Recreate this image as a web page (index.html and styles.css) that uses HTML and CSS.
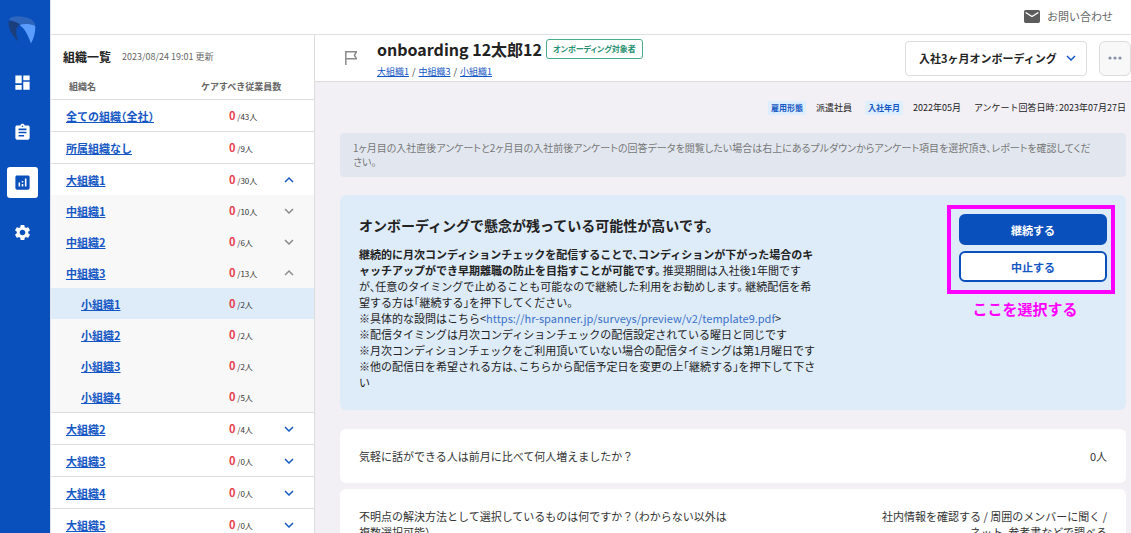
FILE: index.html
```html
<!DOCTYPE html>
<html lang="ja">
<head>
<meta charset="utf-8">
<meta name="viewport" content="width=device-width, initial-scale=1">
<title>組織一覧</title>
<link rel="stylesheet" href="styles.css">
</head>
<body>
<svg class="defs" aria-hidden="true">
  <symbol id="down" viewBox="0 0 24 24"><path d="M16.59 8.59 12 13.17 7.41 8.59 6 10l6 6 6-6z"/></symbol>
  <symbol id="up" viewBox="0 0 24 24"><path d="m12 8-6 6 1.41 1.41L12 10.83l4.59 4.58L18 14z"/></symbol>
</svg>
<div class="app">
  <nav class="rail" aria-label="メインメニュー">
    <svg class="logo" viewBox="0 0 28 28" aria-hidden="true">
      <path fill="#2f66bd" d="M.8 3.500C3 0 9-.3 15 .7c7 1.100 12 4 12.300 9L20 9l-8-.5z"/>
      <path fill="#1b3f7d" d="M.8 5C5 4.500 9 6 12.500 8.800 9 10 6 14 10.500 25.500 4 20-.5 11 .8 5z"/>
      <path fill="#5b9cff" d="M11.500 8.800c5-1.300 11-.8 15.800 1.200C27.500 16 26 22 23 27.500 20 19 17 13 11.500 8.800z"/>
    </svg>
    <a class="rail-item" href="#" aria-label="ダッシュボード"><svg class="icon-l" viewBox="0 0 24 24"><path d="M3 13h8V3H3v10zm0 8h8v-6H3v6zm10 0h8V11h-8v10zm0-18v6h8V3h-8z"/></svg></a>
    <a class="rail-item" href="#" aria-label="アンケート"><svg class="icon-l" viewBox="0 0 24 24"><path d="M19 3h-4.180C14.400 1.840 13.300 1 12 1c-1.300 0-2.400.84-2.820 2H5c-1.100 0-2 .9-2 2v14c0 1.100.9 2 2 2h14c1.100 0 2-.9 2-2V5c0-1.100-.9-2-2-2zm-7 0c.55 0 1 .45 1 1s-.45 1-1 1-1-.45-1-1 .45-1 1-1zm2 14H7v-2h7v2zm3-4H7v-2h10v2zm0-4H7V7h10v2z"/></svg></a>
    <a class="rail-item current" href="#" aria-label="分析"><svg class="icon-l" viewBox="0 0 24 24"><path d="M19 3H5c-1.100 0-2 .9-2 2v14c0 1.100.9 2 2 2h14c1.100 0 2-.9 2-2V5c0-1.100-.9-2-2-2zM9 17H7v-5h2v5zm4 0h-2v-3h2v3zm0-5h-2v-2h2v2zm4 5h-2V7h2v10z"/></svg></a>
    <a class="rail-item" href="#" aria-label="設定"><svg class="icon-l" viewBox="0 0 24 24"><path d="M19.140 12.940c.04-.3.06-.61.06-.94 0-.32-.02-.64-.07-.94l2.030-1.580c.18-.14.23-.41.12-.61l-1.920-3.320c-.12-.22-.37-.29-.59-.22l-2.390.96c-.5-.38-1.030-.7-1.620-.94l-.36-2.540c-.04-.24-.24-.41-.48-.41h-3.840c-.24 0-.43.17-.47.41l-.36 2.540c-.59.24-1.130.57-1.620.94l-2.390-.96c-.22-.08-.47 0-.59.22L2.740 8.870c-.12.21-.08.47.12.61l2.030 1.580c-.05.3-.09.63-.09.94s.02.64.07.94l-2.030 1.580c-.18.14-.23.41-.12.61l1.920 3.320c.12.22.37.29.59.22l2.390-.96c.5.38 1.030.7 1.620.94l.36 2.540c.05.24.24.41.48.41h3.840c.24 0 .44-.17.47-.41l.36-2.540c.59-.24 1.130-.56 1.620-.94l2.390.96c.22.08.47 0 .59-.22l1.920-3.320c.12-.22.07-.47-.12-.61l-2.010-1.580zM12 15.600c-1.980 0-3.600-1.620-3.600-3.600s1.620-3.600 3.600-3.600 3.600 1.620 3.600 3.600-1.620 3.600-3.600 3.600z"/></svg></a>
  </nav>
  <div class="content">
    <header class="topbar">
      <a class="contact" href="#"><svg class="mail" viewBox="2 4 20 16" aria-hidden="true"><path d="M20 4H4c-1.100 0-1.990.9-1.990 2L2 18c0 1.100.9 2 2 2h16c1.100 0 2-.9 2-2V6c0-1.100-.9-2-2-2zm0 4-8 5-8-5V6l8 5 8-5v2z"/></svg>お問い合わせ</a>
    </header>
    <div class="columns">
      <aside class="orgs">
        <div class="orgs-head"><h2>組織一覧</h2><span>2023/08/24 19:01 更新</span></div>
        <table class="org-table">
          <colgroup><col class="col-name"><col><col class="col-toggle"></colgroup>
          <thead><tr><th class="head-name">組織名</th><th colspan="2">ケアすべき従業員数</th></tr></thead>
          <tbody>
            <tr class="top"><td><a href="#">全ての組織（全社）</a></td><td class="count"><b>0</b> /43人</td><td></td></tr>
            <tr class="top"><td><a href="#">所属組織なし</a></td><td class="count"><b>0</b> /9人</td><td></td></tr>
            <tr class="top"><td><a href="#">大組織1</a></td><td class="count"><b>0</b> /30人</td><td><button class="toggle" aria-label="閉じる"><svg><use href="#up"/></svg></button></td></tr>
            <tr class="sub"><td><a href="#">中組織1</a></td><td class="count"><b>0</b> /10人</td><td><button class="toggle" aria-label="開く"><svg><use href="#down"/></svg></button></td></tr>
            <tr class="sub"><td><a href="#">中組織2</a></td><td class="count"><b>0</b> /6人</td><td><button class="toggle" aria-label="開く"><svg><use href="#down"/></svg></button></td></tr>
            <tr class="sub"><td><a href="#">中組織3</a></td><td class="count"><b>0</b> /13人</td><td><button class="toggle" aria-label="閉じる"><svg><use href="#up"/></svg></button></td></tr>
            <tr class="sub leaf selected"><td><a href="#">小組織1</a></td><td class="count"><b>0</b> /2人</td><td></td></tr>
            <tr class="sub leaf"><td><a href="#">小組織2</a></td><td class="count"><b>0</b> /2人</td><td></td></tr>
            <tr class="sub leaf"><td><a href="#">小組織3</a></td><td class="count"><b>0</b> /2人</td><td></td></tr>
            <tr class="sub leaf"><td><a href="#">小組織4</a></td><td class="count"><b>0</b> /5人</td><td></td></tr>
            <tr class="top"><td><a href="#">大組織2</a></td><td class="count"><b>0</b> /4人</td><td><button class="toggle" aria-label="開く"><svg><use href="#down"/></svg></button></td></tr>
            <tr class="top"><td><a href="#">大組織3</a></td><td class="count"><b>0</b> /0人</td><td><button class="toggle" aria-label="開く"><svg><use href="#down"/></svg></button></td></tr>
            <tr class="top"><td><a href="#">大組織4</a></td><td class="count"><b>0</b> /0人</td><td><button class="toggle" aria-label="開く"><svg><use href="#down"/></svg></button></td></tr>
            <tr class="top"><td><a href="#">大組織5</a></td><td class="count"><b>0</b> /0人</td><td><button class="toggle" aria-label="開く"><svg><use href="#down"/></svg></button></td></tr>
          </tbody>
        </table>
      </aside>
      <main class="main">
        <div class="person-bar">
          <button class="flag" aria-label="フラグ"><svg viewBox="0 0 12 14"><path d="M.8 14V.8h10.700L9.400 4.200l2.100 3.600H.8" fill="none" stroke="#8a8a8a" stroke-width="1.500"/></svg></button>
          <div class="person">
            <div class="name-row"><h1>onboarding 12太郎12</h1><span class="tag">オンボーディング対象者</span></div>
            <div class="crumbs"><a href="#">大組織1</a><span>/</span><a href="#">中組織3</a><span>/</span><a href="#">小組織1</a></div>
          </div>
          <div class="picker">
            <select aria-label="アンケート項目"><option>入社3ヶ月オンボーディング</option></select>
            <svg class="picker-arrow" aria-hidden="true"><use href="#down"/></svg>
          </div>
          <button class="more" aria-label="その他"><svg viewBox="0 0 14 4"><circle cx="2" cy="2" r="1.600"/><circle cx="7" cy="2" r="1.600"/><circle cx="12" cy="2" r="1.600"/></svg></button>
        </div>
        <div class="body">
          <div class="meta">
            <span class="label">雇用形態</span><span class="value">派遣社員</span>
            <span class="label">入社年月</span><span class="value">2022年05月</span>
            <span>アンケート回答日時：2023年07月27日</span>
          </div>
          <p class="notice">1ヶ月目の入社直後アンケートと2ヶ月目の入社前後アンケートの回答データを閲覧したい場合は右上にあるプルダウンからアンケート項目を選択頂き、レポートを確認してください。</p>
          <section class="advice">
            <div class="advice-text">
              <h2>オンボーディングで懸念が残っている可能性が高いです。</h2>
              <p><b>継続的に月次コンディションチェックを配信することで、コンディションが下がった場合のキャッチアップができ早期離職の防止を目指すことが可能です。</b> 推奨期間は入社後1年間ですが、任意のタイミングで止めることも可能なので継続した利用をお勧めします。 継続配信を希望する方は「継続する」を押下してください。<br>
              ※具体的な設問はこちら&lt;<a href="#">https://hr-spanner.jp/surveys/preview/v2/template9.pdf</a>&gt;<br>
              ※配信タイミングは月次コンディションチェックの配信設定されている曜日と同じです<br>
              ※月次コンディションチェックをご利用頂いていない場合の配信タイミングは第1月曜日です<br>
              ※他の配信日を希望される方は、こちらから配信予定日を変更の上「継続する」を押下して下さい</p>
            </div>
            <div class="actions">
              <button class="primary">継続する</button>
              <button class="secondary">中止する</button>
              <div class="callout"></div>
              <div class="callout-text">ここを選択する</div>
            </div>
          </section>
          <section class="answers">
            <div class="answer"><div class="question">気軽に話ができる人は前月に比べて何人増えましたか？</div><div class="reply">0人</div></div>
            <div class="answer"><div class="question">不明点の解決方法として選択しているものは何ですか？（わからない以外は複数選択可能）</div><div class="reply">社内情報を確認する / 周囲のメンバーに聞く / ネット、参考書などで調べる</div></div>
          </section>
        </div>
      </main>
    </div>
  </div>
</div>
</body>
</html>
```
FILE: styles.css
```css
* { box-sizing: border-box; }
body {
  margin: 0;
  font: 11px/16px "Noto Sans CJK JP", sans-serif;
  font-feature-settings: "halt";
  color: #333;
  background: #fff;
}
h1, h2, p { margin: 0; }
button, select { font: inherit; font-feature-settings: inherit; cursor: pointer; }
a { color: #1457c4; }
svg { display: block; fill: currentColor; }
.defs { position: absolute; width: 0; height: 0; }

.app { display: flex; height: 100vh; overflow: hidden; }
.rail {
  flex: none;
  width: 50px;
  padding: 16px 0 0 7px;
  display: flex;
  flex-direction: column;
  gap: 19px;
  background: #0a50bd;
}
.logo { width: 28px; height: 28px; margin: 0 0 4px 1px; }
.rail-item {
  width: 31px;
  height: 31px;
  border-radius: 3px;
  display: grid;
  place-items: center;
  color: #fff;
}
.rail-item.current { background: #fff; color: #0a50bd; }
.icon-l { width: 19px; height: 19px; }

.content { flex: 1; min-width: 0; display: flex; flex-direction: column; border-left: 1px solid #dfe3ea; }
.topbar {
  flex: none;
  height: 35px;
  padding: 0 18px 2px;
  display: flex;
  align-items: center;
  justify-content: flex-end;
  border-bottom: 1px solid #e0e0e0;
}
.contact { display: flex; align-items: center; gap: 7px; color: #666; text-decoration: none; }
.mail { width: 16px; height: 13px; color: #5c5c5c; }
.columns { flex: 1; min-height: 0; display: flex; }

.orgs { flex: none; width: 264px; border-right: 1px solid #dcdcdc; overflow: hidden; }
.orgs-head { display: flex; align-items: center; gap: 11px; padding: 13px 12px 9px; }
.orgs-head h2 { font-size: 12px; line-height: 18px; color: #222; }
.orgs-head span { font-size: 9px; color: #666; }
.org-table { width: 100%; border-spacing: 0; table-layout: fixed; }
.col-name { width: 150px; }
.col-toggle { width: 39px; }
.org-table th { height: 24px; padding: 0; text-align: left; font-size: 9px; font-weight: 700; color: #666; }
.org-table .head-name { padding-left: 18px; }
.org-table td { height: 31px; padding: 0; }
.org-table td:first-child { padding-left: 15px; font-weight: 700; }
.org-table .top td { height: 32px; border-top: 1px solid #dedede; }
.org-table .sub td { background: #f8f8f8; }
.org-table .leaf td:first-child { padding-left: 30px; }
.org-table .selected td { background: #deebf8; }
.org-table .count { padding-left: 28px; font-size: 8px; }
.count b { font-size: 11px; color: #e8424f; }
.toggle { display: block; width: 28px; padding: 0 5px; border: 0; background: none; color: #1457c4; }
.toggle svg { width: 18px; height: 18px; }
.sub .toggle { color: #8a8a8a; }

.main { flex: 1; min-width: 0; background: #f2f0f5; }
.person-bar {
  height: 47px;
  padding-left: 30px;
  display: flex;
  align-items: center;
  background: #fff;
  border-bottom: 1px solid #dcdcdc;
}
.flag { padding: 0; border: 0; background: none; }
.flag svg { width: 12px; height: 14px; }
.person { flex: 1; margin-left: 20px; }
.name-row { display: flex; align-items: center; gap: 4px; }
h1 { font-size: 16px; line-height: 24px; color: #222; }
.tag {
  padding: 0 6px;
  border: 1px solid #4aab8c;
  border-radius: 3px;
  font-size: 8px;
  line-height: 18px;
  font-weight: 700;
  font-feature-settings: "palt";
  color: #279070;
}
.crumbs { display: flex; gap: 3px; margin-top: 3px; font-size: 9px; line-height: 16px; }
.picker { position: relative; width: 182px; }
.picker select {
  appearance: none;
  width: 100%;
  height: 35px;
  padding: 0 28px 0 13px;
  border: 1px solid #dcdcdc;
  border-radius: 4px;
  background: #fff;
  color: #222;
  font-weight: 700;
}
.picker-arrow {
  position: absolute;
  right: 7px;
  top: 8px;
  width: 18px;
  height: 18px;
  color: #1457c4;
  pointer-events: none;
}
.more {
  width: 32px;
  height: 35px;
  margin-left: 12px;
  padding: 0;
  display: grid;
  place-items: center;
  border: 1px solid #dcdcdc;
  border-radius: 6px;
  background: #f8f8f8;
  color: #8791a5;
}
.more svg { width: 14px; height: 4px; }

.body { padding: 18px 5px 0 25px; }
.meta { display: flex; justify-content: flex-end; align-items: center; font-size: 9px; color: #222; }
.label { padding: 0 3px; background: #deeefc; color: #1457c4; font-size: 8px; line-height: 14px; font-weight: 700; }
.value { margin: 0 13px 0 10px; }
.notice {
  margin-top: 17px;
  padding: 8px 30px 8px 13px;
  border-radius: 4px;
  background: #e2e7ef;
  color: #777;
  font-size: 10px;
  line-height: 14px;
  font-feature-settings: "palt";
}
.advice {
  margin-top: 18px;
  padding: 19px 19px 20px;
  display: flex;
  justify-content: space-between;
  align-items: flex-start;
  border-radius: 6px;
  background: #deebf8;
}
.advice-text { width: 457px; color: #222; }
.advice-text h2 { margin-bottom: 10px; font-size: 14px; line-height: 22px; }
.advice-text a { color: #3b72c8; text-decoration: none; }
.actions { position: relative; width: 148px; display: grid; gap: 6px; }
.primary, .secondary {
  height: 31px;
  padding: 0;
  border: 2px solid #0a50bd;
  border-radius: 6px;
  font-weight: 700;
}
.primary { background: #0a50bd; color: #fff; }
.secondary { background: #fff; color: #1457c4; }
.callout { position: absolute; inset: -9px -8px -12px -12px; border: 4px solid #f0f; pointer-events: none; }
.callout-text {
  position: absolute;
  top: 84px;
  left: 0;
  width: 132px;
  text-align: center;
  font-size: 15px;
  line-height: 22px;
  font-weight: 700;
  color: #f0f;
}
.answers { margin-top: 19px; display: grid; gap: 6px; }
.answer {
  padding: 19px;
  display: flex;
  justify-content: space-between;
  border-radius: 6px;
  background: #fff;
}
.question { width: 50%; }
.reply { width: 236px; text-align: right; }
```
